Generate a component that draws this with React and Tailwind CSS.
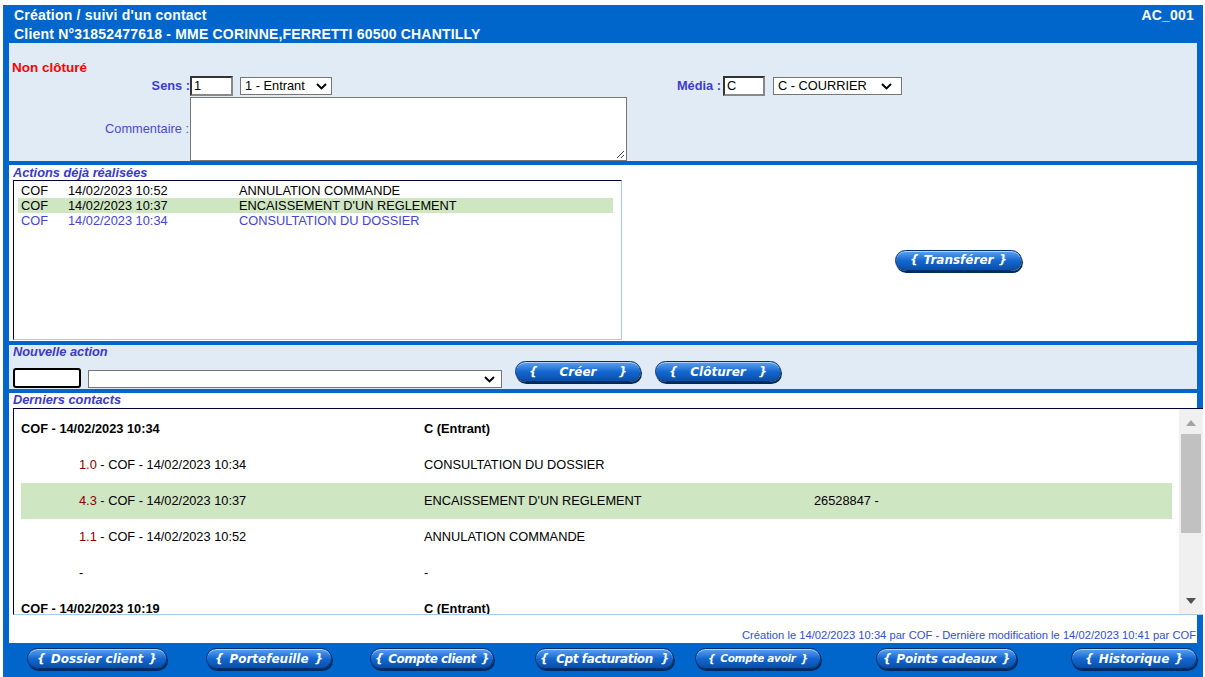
import React from "react";

const BLUE_BTN =
  "shrink-0 h-[21px] rounded-full border border-[#00306e] bg-linear-to-b from-[#5aa2f0] via-[#1468d2] to-[#0a4ea6] shadow-[inset_0_1px_0_rgba(255,255,255,0.55),1px_2px_0_#002a5c] flex items-center justify-between whitespace-nowrap text-white italic font-bold font-['DejaVu_Sans',Verdana,sans-serif] leading-none";

const Btn = ({ label, className }) => (
  <button className={`${BLUE_BTN} ${className}`}>
    <span>{"{"}</span>
    <span>{label}</span>
    <span>{"}"}</span>
  </button>
);

const Chevron = () => (
  <svg width="11" height="7" viewBox="0 0 11 7" className="shrink-0">
    <path d="M1 1l4.5 4.5L10 1" fill="none" stroke="#000" strokeWidth="1.9" />
  </svg>
);

const actions = [
  { who: "COF", date: "14/02/2023 10:52", label: "ANNULATION COMMANDE", color: "text-black" },
  { who: "COF", date: "14/02/2023 10:37", label: "ENCAISSEMENT D'UN REGLEMENT", color: "text-black", hl: true },
  { who: "COF", date: "14/02/2023 10:34", label: "CONSULTATION DU DOSSIER", color: "text-[#4545d0]" },
];

const contacts = [
  { head: true, a: "COF - 14/02/2023 10:34", b: "C (Entrant)" },
  { num: "1.0", a: " - COF - 14/02/2023 10:34", b: "CONSULTATION DU DOSSIER" },
  { num: "4.3", a: " - COF - 14/02/2023 10:37", b: "ENCAISSEMENT D'UN REGLEMENT", c: "26528847 -", hl: true },
  { num: "1.1", a: " - COF - 14/02/2023 10:52", b: "ANNULATION COMMANDE" },
  { num: "", a: "-", b: "-" },
  { head: true, a: "COF - 14/02/2023 10:19", b: "C (Entrant)" },
];

export default function App() {
  return (
    <div className="min-h-screen bg-white pt-[5px] pl-[3px] font-['Liberation_Sans',Arial,sans-serif] text-[12.8px] text-black">
      <div className="w-[1200px] bg-[#0066cc] pb-[3px]">
        {/* en-tête */}
        <div className="h-[38px] pl-[11px] pr-[9px] pt-[1px] flex justify-between text-white font-bold text-[14px] tracking-[0.2px] leading-[19px]">
          <div>
            <div>Création / suivi d'un contact</div>
            <div>Client N°31852477618 - MME CORINNE,FERRETTI 60500 CHANTILLY</div>
          </div>
          <div>AC_001</div>
        </div>

        <div className="mx-[6px]">
          {/* saisie */}
          <div className="bg-[#e1ebf5] h-[118px] pt-[17px] pl-[3px]">
            <div className="text-[#ff0000] font-bold text-[13.5px] leading-[15px]">Non clôturé</div>
            <div className="mt-[1px] flex items-center h-[20px]">
              <span className="w-[178px] text-right font-bold text-[#3c3cd0]">Sens :</span>
              <div className="w-[43px] h-[20px] bg-white border-2 border-[#333] border-r-[#888] border-b-[#888] pl-[2px] leading-[16px]">1</div>
              <div className="ml-[7px] w-[92px] h-[18px] bg-white border border-[#767676] flex items-center justify-between pl-[4px] pr-[4px]">
                <span>1 - Entrant</span>
                <Chevron />
              </div>
              <span className="w-[389px] text-right font-bold text-[#3c3cd0]">Média :</span>
              <div className="ml-[2px] w-[42px] h-[20px] bg-white border-2 border-[#333] border-r-[#888] border-b-[#888] pl-[2px] leading-[16px]">C</div>
              <div className="ml-[8px] w-[129px] h-[18px] bg-white border border-[#767676] flex items-center justify-between pl-[4px] pr-[9px]">
                <span>C - COURRIER</span>
                <Chevron />
              </div>
            </div>
            <div className="mt-[1px] flex items-center">
              <span className="w-[178px] text-right text-[#4a4ad0] pr-[1px]">Commentaire :</span>
              <div className="relative w-[437px] h-[64px] bg-white border border-[#767676]">
                <svg width="10" height="10" viewBox="0 0 10 10" className="absolute right-[1px] bottom-[1px]">
                  <path d="M9 2L2 9M9 6L6 9" stroke="#444" strokeWidth="1" />
                </svg>
              </div>
            </div>
          </div>

          <div className="h-[4px] bg-[#0066cc]" />

          {/* actions déjà réalisées */}
          <div className="bg-white h-[176px]">
            <div className="h-[15px] pl-[4px] italic font-bold text-[#3a3acc] leading-[15px]">Actions déjà réalisées</div>
            <div className="flex items-center">
              <div className="ml-[4px] w-[609px] h-[160px] border border-[#00003c] border-r-[#a8c8ec] border-b-[#a8c8ec] pt-[2px]">
                {actions.map((a) => (
                  <div
                    key={a.date}
                    className={`ml-[4px] mr-[8px] h-[15px] flex items-center pl-[3px] leading-[15px] ${a.color} ${a.hl ? "bg-[#cfe6c3]" : ""}`}
                  >
                    <span className="w-[47px]">{a.who}</span>
                    <span className="w-[171px]">{a.date}</span>
                    <span>{a.label}</span>
                  </div>
                ))}
              </div>
              <div className="flex-1 flex justify-center pl-[98px]">
                <Btn label="Transférer" className="w-[127px] h-[21px] px-[14px] text-[12px]" />
              </div>
            </div>
          </div>

          <div className="h-[4px] bg-[#0066cc]" />

          {/* nouvelle action */}
          <div className="bg-[#e1ebf5] h-[44px]">
            <div className="h-[14px] pl-[4px] italic font-bold text-[#3a3acc] leading-[13px]">Nouvelle action</div>
            <div className="flex items-start pl-[4px] h-[30px]">
              <div className="mt-[9px] w-[68px] h-[20px] bg-white border-2 border-black rounded-[3px]" />
              <div className="mt-[11px] ml-[7px] w-[414px] h-[18px] bg-white border border-[#767676] flex items-center justify-end pr-[6px]">
                <Chevron />
              </div>
              <Btn label="Créer" className="mt-[2px] ml-[13px] w-[126px] h-[20px] px-[13px] text-[12px]" />
              <Btn label="Clôturer" className="mt-[2px] ml-[14px] w-[126px] h-[20px] px-[13px] text-[12px]" />
            </div>
          </div>

          <div className="h-[4px] bg-[#0066cc]" />

          {/* derniers contacts */}
          <div className="bg-white">
            <div className="h-[15px] pl-[4px] italic font-bold text-[#3a3acc] leading-[14px]">Derniers contacts</div>
            <div className="ml-[4px] mr-[-6px] h-[207px] border border-[#00003c] border-r-0 border-b-[#a8c8ec] flex">
              <div className="flex-1 overflow-hidden pt-[2px] pl-[7px]">
                {contacts.map((c, i) => (
                  <div
                    key={i}
                    className={`w-[1151px] h-[36px] flex items-center ${c.hl ? "bg-[#cfe6c3]" : ""} ${c.head ? "font-bold" : ""}`}
                  >
                    <span className={`w-[403px] ${c.head ? "" : "pl-[58px]"}`}>
                      {c.num && <span className="text-[#8a0000]">{c.num}</span>}
                      {c.a}
                    </span>
                    <span className="w-[390px]">{c.b}</span>
                    <span>{c.c}</span>
                  </div>
                ))}
              </div>
              <div className="w-[24px] bg-[#f0f0f0] flex flex-col items-center">
                <div className="h-[25px] flex items-center justify-center pt-[2px]">
                  <svg width="10" height="6" viewBox="0 0 10 6"><path d="M0 6L5 0L10 6Z" fill="#a3a3a3" /></svg>
                </div>
                <div className="w-[20px] h-[99px] bg-[#c1c1c1]" />
                <div className="flex-1" />
                <div className="h-[22px] flex items-center justify-center pb-[4px]">
                  <svg width="10" height="6" viewBox="0 0 10 6"><path d="M0 0L5 6L10 0Z" fill="#505050" /></svg>
                </div>
              </div>
            </div>
            <div className="h-[28px] pr-[1px] pt-[14px] text-right text-[11.2px] leading-[13px] text-[#3350cc]">
              Création le 14/02/2023 10:34 par COF - Dernière modification le 14/02/2023 10:41 par COF
            </div>
          </div>
        </div>

        {/* barre de boutons */}
        <div className="h-[31px] pt-[5px] flex items-start text-[12px]">
          <Btn label="Dossier client" className="ml-[24px] w-[140px] px-[9px]" />
          <Btn label="Portefeuille" className="ml-[39px] w-[126px] px-[8px]" />
          <Btn label="Compte client" className="ml-[38px] w-[124px] px-[4px] tracking-[-0.5px]" />
          <Btn label="Cpt facturation" className="ml-[41px] w-[139px] px-[4px] tracking-[-0.4px]" />
          <Btn label="Compte avoir" className="ml-[21px] w-[126px] px-[12px] text-[10.5px] tracking-[-0.3px]" />
          <Btn label="Points cadeaux" className="ml-[55px] w-[141px] px-[6px] tracking-[-0.2px]" />
          <Btn label="Historique" className="ml-[54px] w-[126px] px-[13px]" />
        </div>
      </div>
    </div>
  );
}
